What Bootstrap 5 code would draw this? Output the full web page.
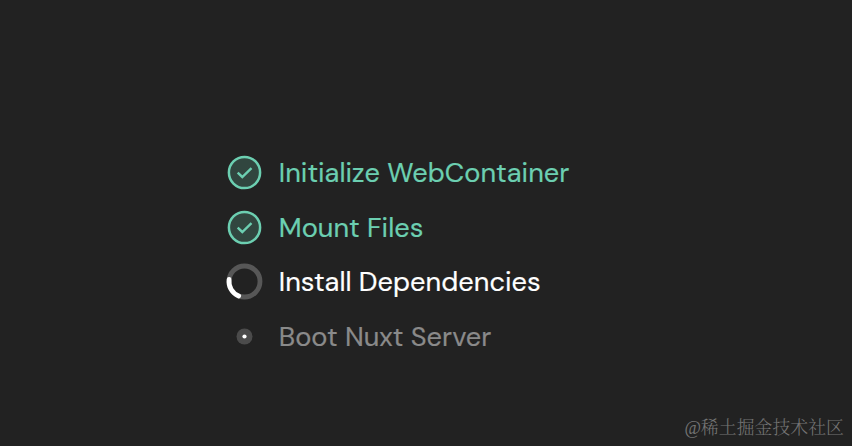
<!DOCTYPE html>
<html lang="en">
<head>
  <meta charset="UTF-8" />
  <meta name="viewport" content="width=device-width, initial-scale=1.0"/>
  <title>Nuxt Playground</title>
  <link href="https://cdn.jsdelivr.net/npm/bootstrap@5.3.0/dist/css/bootstrap.min.css" rel="stylesheet" />

  <style>
    body {
      background-color: #222222;
      font-family: "DM Sans", "Open Sans", "Liberation Sans", sans-serif;
    }

    .step-list {
      padding: 145px 0 0 225px;
    }

    .step-item {
      height: 54.7px;
      gap: 14.8px;
      font-size: 27.2px;
      letter-spacing: 0.03px;
      line-height: 27px;
      color: #8a8a8a;
      -webkit-text-stroke: 0.2px currentColor;
    }

    .step-item svg {
      width: 39px;
      height: 39px;
    }

    .step-done {
      color: #6ccfb1;
    }

    .step-active {
      color: #ffffff;
    }

    .watermark {
      right: 8px;
      bottom: 6px;
      font-family: "Liberation Serif", "Noto Serif CJK SC", "Noto Sans CJK SC", serif;
      font-size: 17.9px;
      font-weight: 300;
      line-height: 24px;
      color: #747474;
    }
  </style>
</head>
<body class="vh-100 overflow-hidden position-relative">
  <main>
    <ul class="step-list list-unstyled mb-0">
      <li class="step-item step-done d-flex align-items-center">
        <svg viewBox="0 0 39 39" fill="none" stroke="currentColor">
          <circle cx="19.5" cy="19.5" r="15.6" fill="#31463f" stroke-width="2.5"/>
          <path d="M12.7 19.7l4.6 4.3 9.2-8.8" stroke-width="2.4"/>
        </svg>
        <span class="text-nowrap">Initialize WebContainer</span>
      </li>
      <li class="step-item step-done d-flex align-items-center">
        <svg viewBox="0 0 39 39" fill="none" stroke="currentColor">
          <circle cx="19.5" cy="19.5" r="15.6" fill="#31463f" stroke-width="2.5"/>
          <path d="M12.7 19.7l4.6 4.3 9.2-8.8" stroke-width="2.4"/>
        </svg>
        <span class="text-nowrap">Mount Files</span>
      </li>
      <li class="step-item step-active d-flex align-items-center">
        <svg viewBox="0 0 39 39" fill="none" stroke-width="4.8">
          <circle cx="19.5" cy="19.5" r="15.5" stroke="#575757"/>
          <path d="M4.1 17.5A15.5 15.5 0 0 0 13.7 33.9" stroke="#ffffff" stroke-linecap="round"/>
        </svg>
        <span class="text-nowrap">Install Dependencies</span>
      </li>
      <li class="step-item d-flex align-items-center">
        <svg viewBox="0 0 39 39">
          <circle cx="19.5" cy="19.5" r="8" fill="#4b4b4b"/>
          <circle cx="19.5" cy="19.5" r="2.1" fill="#ffffff"/>
        </svg>
        <span class="text-nowrap">Boot Nuxt Server</span>
      </li>
    </ul>
  </main>
  <div class="watermark position-absolute text-nowrap">@稀土掘金技术社区</div>
</body>
</html>
